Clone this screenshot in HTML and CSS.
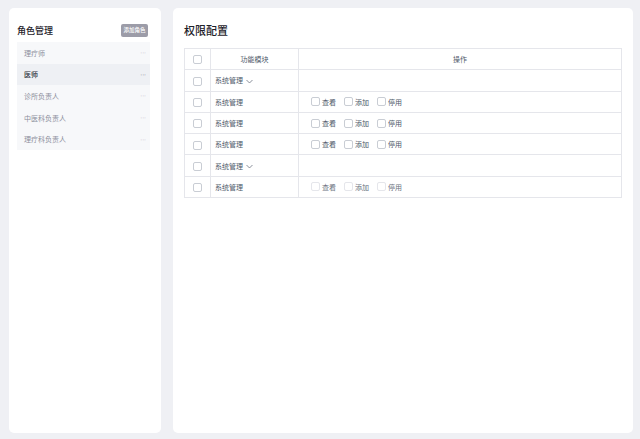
FILE: index.html
```html
<!DOCTYPE html>
<html lang="zh-CN">
<head>
<meta charset="utf-8">
<link rel="stylesheet" href="styles.css">
</head>
<body>
<div class="page">
  <aside class="card roles">
    <div class="roles-head">
      <h2 class="roles-title">角色管理</h2>
      <button class="add-btn">添加角色</button>
    </div>
    <ul class="role-list">
      <li class="role-item"><span>理疗师</span><span class="dots">···</span></li>
      <li class="role-item active"><span>医师</span><span class="dots">···</span></li>
      <li class="role-item"><span>诊所负责人</span><span class="dots">···</span></li>
      <li class="role-item"><span>中医科负责人</span><span class="dots">···</span></li>
      <li class="role-item"><span>理疗科负责人</span><span class="dots">···</span></li>
    </ul>
  </aside>
  <main class="card perms">
    <h2 class="perms-title">权限配置</h2>
    <table class="perm-table">
      <colgroup><col class="c1"><col class="c2"><col class="c3"></colgroup>
      <thead>
        <tr><th><span class="cb"></span></th><th>功能模块</th><th>操作</th></tr>
      </thead>
      <tbody>
        <tr><td class="cbc"><span class="cb"></span></td><td class="mod">系统管理 <svg class="chev" viewBox="0 0 8 5" width="7" height="5"><path d="M0.6 0.8 L4 4.2 L7.4 0.8" fill="none" stroke="#6b7280" stroke-width="0.9"/></svg></td><td></td></tr>
        <tr><td class="cbc"><span class="cb"></span></td><td class="mod">系统管理</td><td><div class="ops"><label class="op"><span class="cb"></span>查看</label><label class="op"><span class="cb"></span>添加</label><label class="op"><span class="cb"></span>停用</label></div></td></tr>
        <tr><td class="cbc"><span class="cb"></span></td><td class="mod">系统管理</td><td><div class="ops"><label class="op"><span class="cb"></span>查看</label><label class="op"><span class="cb"></span>添加</label><label class="op"><span class="cb"></span>停用</label></div></td></tr>
        <tr><td class="cbc"><span class="cb"></span></td><td class="mod">系统管理</td><td><div class="ops"><label class="op"><span class="cb"></span>查看</label><label class="op"><span class="cb"></span>添加</label><label class="op"><span class="cb"></span>停用</label></div></td></tr>
        <tr><td class="cbc"><span class="cb"></span></td><td class="mod">系统管理 <svg class="chev" viewBox="0 0 8 5" width="7" height="5"><path d="M0.6 0.8 L4 4.2 L7.4 0.8" fill="none" stroke="#6b7280" stroke-width="0.9"/></svg></td><td></td></tr>
        <tr><td class="cbc"><span class="cb"></span></td><td class="mod">系统管理</td><td><div class="ops disabled"><label class="op"><span class="cb"></span>查看</label><label class="op"><span class="cb"></span>添加</label><label class="op"><span class="cb"></span>停用</label></div></td></tr>
      </tbody>
    </table>
  </main>
</div>
</body>
</html>
```
FILE: styles.css
```css
* { box-sizing: border-box; }
html, body { margin: 0; padding: 0; }
body {
  background: #eff0f4;
  font-family: "Noto Sans CJK SC", "Noto Sans", sans-serif;
  color: #4e5969;
  width: 640px;
  height: 439px;
  overflow: hidden;
}
.page {
  display: flex;
  gap: 12px;
  padding: 8px 7px 6px 9px;
  height: 439px;
}
.card {
  background: #fff;
  border-radius: 5px;
}
.roles {
  width: 152px;
  padding: 12px 11px 0 8px;
}
.roles-head {
  height: 20px;
  margin-bottom: 2px;
  display: flex;
  align-items: center;
  justify-content: space-between;
}
.roles-title {
  margin: 0;
  font-size: 9px;
  font-weight: 500;
  color: #1d2129;
  line-height: 1;
}
.add-btn {
  border: 0;
  background: #9c9ca8;
  color: #fff;
  font-family: inherit;
  font-size: 5.5px;
  font-weight: 500;
  height: 13px;
  width: 27px;
  padding: 0;
  border-radius: 2px;
  margin-right: 2px;
  line-height: 13px;
}
.role-list {
  list-style: none;
  margin: 0;
  padding: 0;
  background: #f7f8fa;
}
.role-item {
  height: 21.6px;
  display: flex;
  align-items: center;
  justify-content: space-between;
  padding: 0 4px 0 7px;
  font-size: 7px;
  color: #8c8f9c;
}
.role-item.active {
  background: #eef0f4;
  color: #2b2f3a;
  font-weight: 500;
}
.dots {
  font-family: "DejaVu Sans", sans-serif;
  font-size: 6px;
  font-weight: 400;
  color: #b4b7c0;
  letter-spacing: 0;
}
.role-item.active .dots { color: #6b6f7a; }
.perms {
  flex: 1;
  padding: 14px 11px 0 11px;
}
.perms-title {
  margin: 0 0 10px;
  height: 16px;
  line-height: 16px;
  font-size: 11px;
  font-weight: 500;
  color: #1d2129;
}
.perm-table {
  width: 100%;
  border-collapse: collapse;
  table-layout: fixed;
  font-size: 7px;
}
.c1 { width: 26px; }
.c2 { width: 88px; }
.perm-table th, .perm-table td {
  border: 1px solid #e5e6eb;
  height: 21.3px;
  padding: 0;
  vertical-align: middle;
}
.perm-table th {
  font-weight: 400;
  color: #4e5969;
  text-align: center;
}
.perm-table th:first-child, .cbc { text-align: center; }
.cb {
  display: inline-block;
  width: 9px;
  height: 9px;
  border: 1px solid #c9cdd4;
  border-radius: 2px;
  background: #fff;
  vertical-align: middle;
}
.perm-table th .cb, .cbc .cb { margin-left: -1px; }
.mod {
  padding-left: 4px !important;
  color: #4e5969;
}
.chev { vertical-align: middle; margin-left: 1px; }
.ops {
  display: flex;
  gap: 8px;
  padding-left: 12px;
  align-items: center;
}
.op {
  display: flex;
  align-items: center;
  gap: 2px;
  color: #4e5969;
}
.ops.disabled .cb { border-color: #e5e6eb; }
.ops.disabled .op { color: #6b7280; }
```
